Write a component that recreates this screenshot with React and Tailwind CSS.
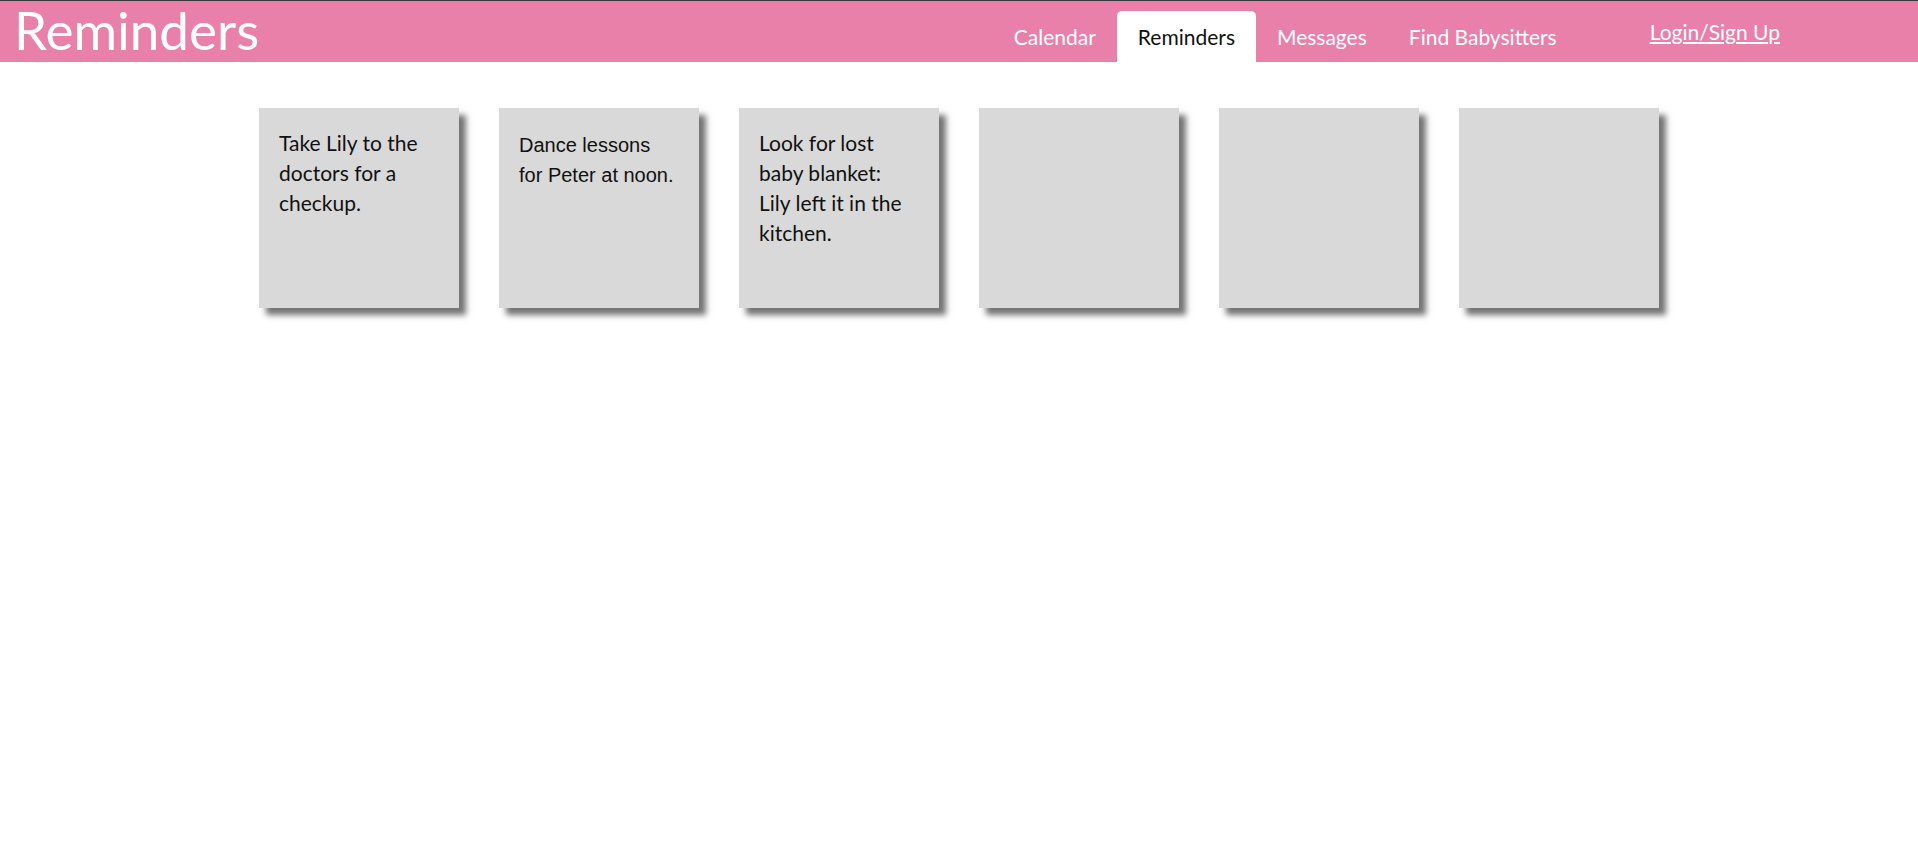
import React from "react";

const lato = "font-['Lato',sans-serif]";

function NavItem({ label, active }) {
  return (
    <li
      className={
        "h-[51px] px-[21px] pt-[14px] text-[21px] leading-[24px] " +
        (active ? "rounded-t-[5px] bg-white text-[#111]" : "text-white")
      }
    >
      {label}
    </li>
  );
}

function Note({ children, arial }) {
  return (
    <div
      className={
        "h-[200px] w-[200px] shrink-0 bg-[#d9d9d9] text-[#111] shadow-[7px_7px_6px_rgba(0,0,0,0.55)] " +
        (arial
          ? "px-5 pt-[22px] font-['Liberation_Sans',Arial,sans-serif] text-[20px] leading-[30px]"
          : "pl-5 pr-[30px] pt-5 text-[21px] leading-[30px]")
      }
    >
      {children}
    </div>
  );
}

export default function App() {
  return (
    <div className={"min-h-[866px] bg-white " + lato}>
      <header className="flex h-[62px] items-start border-t border-[#3a3a3a] bg-[#e980aa]">
        <h1 className="mt-[3px] pl-[14px] text-[53px] leading-[52px] font-normal text-white">Reminders</h1>
        <nav className="ml-auto mt-[10px] flex items-start">
          <ul className="flex">
            <NavItem label="Calendar" />
            <NavItem label="Reminders" active />
            <NavItem label="Messages" />
            <NavItem label="Find Babysitters" />
          </ul>
          <a href="#" className="ml-[72px] mr-[138px] mt-[9px] text-[21px] leading-[24px] text-white underline">
            Login/Sign Up
          </a>
        </nav>
      </header>
      <main className="mt-[46px] flex justify-center gap-10">
        <Note>Take Lily to the doctors for a checkup.</Note>
        <Note arial>Dance lessons for Peter at noon.</Note>
        <Note>Look for lost baby blanket: Lily left it in the kitchen.</Note>
        <Note />
        <Note />
        <Note />
      </main>
    </div>
  );
}
